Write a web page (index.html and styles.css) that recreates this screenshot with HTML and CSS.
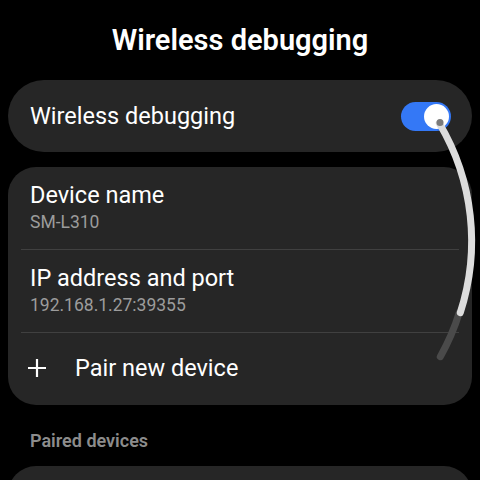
FILE: index.html
```html
<!DOCTYPE html>
<html lang="en">
<head>
<meta charset="UTF-8" />
<meta name="viewport" content="width=device-width, initial-scale=1.0" />
<title>Wireless debugging</title>
<link rel="stylesheet" href="styles.css">
</head>
<body>
  <div class="screen">
    <h1 class="title">Wireless debugging</h1>

    <div class="card card-switch">
      <span class="row-label">Wireless debugging</span>
      <div class="toggle on"><div class="knob"></div></div>
    </div>

    <div class="card card-list">
      <div class="row">
        <div class="row-label">Device name</div>
        <div class="row-sub">SM-L310</div>
      </div>
      <div class="divider"></div>
      <div class="row">
        <div class="row-label">IP address and port</div>
        <div class="row-sub">192.168.1.27:39355</div>
      </div>
      <div class="divider"></div>
      <div class="row row-action">
        <svg class="plus" width="20" height="20" viewBox="0 0 20 20">
          <path d="M10 1 V19 M1 10 H19" stroke="white" stroke-width="2.2" fill="none"/>
        </svg>
        <span class="row-label">Pair new device</span>
      </div>
    </div>

    <div class="section-label">Paired devices</div>
    <div class="card card-paired"></div>

    <!-- round scroll indicator, follows the watch bezel -->
    <svg class="scrollbar" width="480" height="480" viewBox="0 0 480 480">
      <path d="M 459.3 312.6 A 231 231 0 0 1 440.3 356.7" fill="none" stroke="#4a4a4a" stroke-width="7" stroke-linecap="round"/>
      <path d="M 439.3 123.3 A 231 231 0 0 1 460.3 312.6" fill="none" stroke="#dcdcdc" stroke-width="7" stroke-linecap="round"/>
      <circle cx="440" cy="122.5" r="3.5" fill="#7a7a7a"/>
    </svg>
  </div>
</body>
</html>
```

FILE: styles.css
```css
* {
  box-sizing: border-box;
}

body {
  margin: 0;
  background-color: black;
  color: white;
  font-family: Roboto, "Noto Sans", sans-serif;
}

.screen {
  position: relative;
  width: 480px;
  height: 480px;
  overflow: hidden;
  padding: 0 8px;
}

.title {
  margin: 0;
  height: 80px;
  line-height: 80px;
  text-align: center;
  font-size: 29px;
  font-weight: 600;
}

.card {
  background-color: #262626;
}

.card-switch {
  height: 72px;
  border-radius: 36px;
  display: flex;
  align-items: center;
  justify-content: space-between;
  padding: 0 21px 0 22px;
}

.row-label {
  font-size: 23.5px;
  line-height: 28px;
}

.toggle {
  width: 50px;
  height: 29px;
  border-radius: 15px;
  background-color: #3478f6;
  display: flex;
  align-items: center;
  padding: 0 2px;
}

.toggle.on {
  justify-content: flex-end;
}

.knob {
  width: 25px;
  height: 25px;
  border-radius: 50%;
  background-color: white;
}

.card-list {
  margin-top: 15px;
  border-radius: 28px;
  padding: 0 13px;
}

.row {
  height: 82px;
  display: flex;
  flex-direction: column;
  justify-content: center;
  padding-left: 9px;
  padding-bottom: 2px;
}

.row-sub {
  font-size: 17.5px;
  line-height: 22px;
  color: #9c9c9c;
  margin-top: 2px;
}

.divider {
  height: 1px;
  background-color: #404040;
}

.row-action {
  height: 72px;
  flex-direction: row;
  align-items: center;
  justify-content: flex-start;
  padding-left: 6px;
}

.plus {
  margin-right: 28px;
  flex-shrink: 0;
}

.section-label {
  padding: 25px 0 0 22px;
  height: 61px;
  font-size: 18px;
  font-weight: 600;
  color: #8c8c8c;
}

.card-paired {
  height: 60px;
  border-radius: 28px;
}

.scrollbar {
  position: absolute;
  left: 0;
  top: 0;
}
```
